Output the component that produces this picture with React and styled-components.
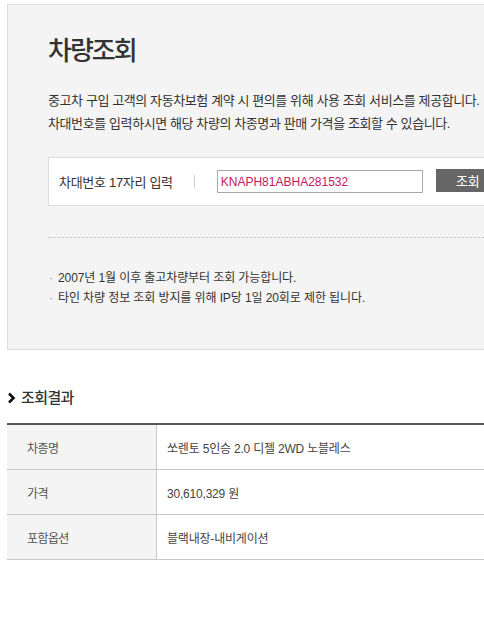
import React, { useState } from 'react';
import styled, { createGlobalStyle } from 'styled-components';

const GlobalStyle = createGlobalStyle`
  html, body {
    margin: 0;
    padding: 0;
    background: #fff;
    overflow: hidden;
  }
  body {
    font-family: "Liberation Sans", "Noto Sans CJK KR", sans-serif;
    color: #333;
  }
`;

const Page = styled.div`
  width: 620px;
  padding: 4px 0 80px 7px;
`;

const InfoPanel = styled.section`
  background: #f4f4f4;
  border: 1px solid #dcdcdc;
  padding: 28px 0 41px 40px;
`;

const Title = styled.h2`
  margin: 0;
  font-size: 26px;
  line-height: 36px;
  font-weight: 500;
  letter-spacing: -2px;
  color: #333;
`;

const Description = styled.p`
  margin: 20px 0 0;
  font-size: 13px;
  line-height: 23px;
  letter-spacing: -0.4px;
  color: #333;
  white-space: nowrap;
`;

const SearchBox = styled.div`
  display: flex;
  align-items: center;
  height: 47px;
  margin-top: 22px;
  padding-left: 10px;
  background: #fff;
  border: 1px solid #dcdcdc;
`;

const SearchLabel = styled.span`
  font-size: 13px;
  letter-spacing: -0.3px;
  color: #333;
`;

const Divider = styled.span`
  width: 1px;
  height: 13px;
  margin: 0 22px 0 21px;
  background: #ccc;
`;

const VinInput = styled.input`
  box-sizing: border-box;
  width: 206px;
  height: 23px;
  padding: 0 3px;
  border: 1px solid #a9a9a9;
  font-family: "Liberation Sans", sans-serif;
  font-size: 12px;
  color: #c4185c;
  outline: none;
`;

const SearchButton = styled.button`
  width: 64px;
  height: 23px;
  margin-left: 13px;
  margin-top: -2px;
  padding: 0;
  border: 0;
  background: #666;
  color: #fff;
  font-family: "Noto Sans CJK KR", sans-serif;
  font-size: 13px;
  letter-spacing: -0.3px;
  cursor: pointer;
`;

const DottedRule = styled.hr`
  margin: 31px 0 0;
  border: 0;
  border-top: 1px dotted #bbb;
`;

const Notes = styled.ul`
  margin: 30px 0 0;
  padding: 0;
  list-style: none;
`;

const Note = styled.li`
  position: relative;
  padding-left: 10px;
  font-size: 12px;
  line-height: 20px;
  letter-spacing: -0.1px;
  color: #333;

  &::before {
    content: '·';
    position: absolute;
    left: 1px;
    color: #999;
  }
`;

const ResultHeading = styled.h3`
  display: flex;
  align-items: center;
  gap: 5px;
  margin: 38px 0 0;
  font-size: 15px;
  line-height: 20px;
  font-weight: 500;
  letter-spacing: -0.6px;
  color: #333;
`;

const ResultTable = styled.table`
  width: 100%;
  margin-top: 15px;
  border-collapse: collapse;
  border-top: 2px solid #555;
`;

const Row = styled.tr`
  border-bottom: 1px solid #c8c8c8;
`;

const HeadCell = styled.th`
  width: 129px;
  height: 44px;
  padding: 0 0 0 20px;
  background: #f4f4f4;
  border-right: 1px solid #c8c8c8;
  text-align: left;
  font-size: 12px;
  font-weight: normal;
  letter-spacing: -0.6px;
  color: #555;
`;

const ValueCell = styled.td`
  height: 44px;
  padding: 0 0 0 10px;
  font-size: 12px;
  letter-spacing: -0.2px;
  color: #444;
`;

const Chevron = () => (
  <svg width="9" height="12" viewBox="0 0 9 12">
    <path d="M2 1.5 L6.5 6 L2 10.5" fill="none" stroke="#111" strokeWidth="2.6" />
  </svg>
);

const rows = [
  ['차종명', '쏘렌토 5인승 2.0 디젤 2WD 노블레스'],
  ['가격', '30,610,329 원'],
  ['포함옵션', '블랙내장-내비게이션'],
];

export default function App() {
  const [vin, setVin] = useState('KNAPH81ABHA281532');

  return (
    <Page>
      <GlobalStyle />
      <InfoPanel>
        <Title>차량조회</Title>
        <Description>
          중고차 구입 고객의 자동차보험 계약 시 편의를 위해 사용 조회 서비스를 제공합니다.
          <br />
          차대번호를 입력하시면 해당 차량의 차종명과 판매 가격을 조회할 수 있습니다.
        </Description>
        <SearchBox>
          <SearchLabel>차대번호 17자리 입력</SearchLabel>
          <Divider />
          <VinInput value={vin} onChange={(e) => setVin(e.target.value)} />
          <SearchButton>조회</SearchButton>
        </SearchBox>
        <DottedRule />
        <Notes>
          <Note>2007년 1월 이후 출고차량부터 조회 가능합니다.</Note>
          <Note>타인 차량 정보 조회 방지를 위해 IP당 1일 20회로 제한 됩니다.</Note>
        </Notes>
      </InfoPanel>

      <ResultHeading>
        <Chevron />
        조회결과
      </ResultHeading>
      <ResultTable>
        <tbody>
          {rows.map(([label, value]) => (
            <Row key={label}>
              <HeadCell>{label}</HeadCell>
              <ValueCell>{value}</ValueCell>
            </Row>
          ))}
        </tbody>
      </ResultTable>
    </Page>
  );
}
